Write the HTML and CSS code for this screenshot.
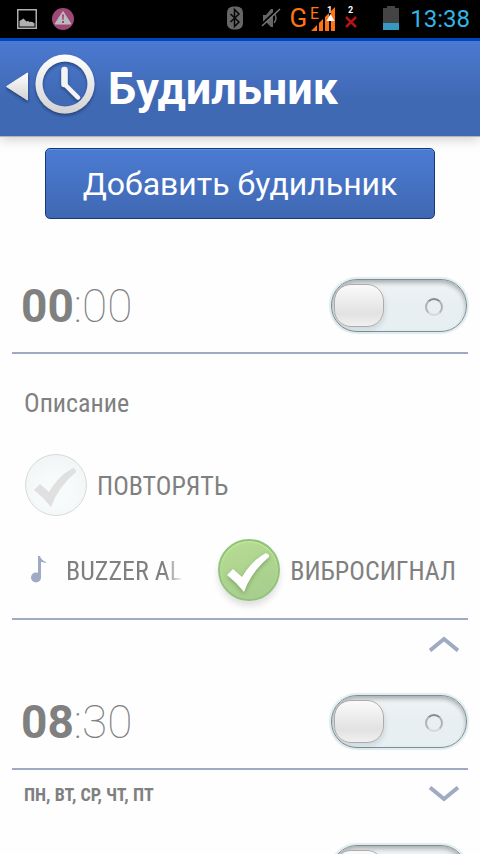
FILE: index.html
```html
<!DOCTYPE html>
<html lang="ru">
<head>
<meta charset="utf-8">
<meta name="viewport" content="width=device-width, initial-scale=1">
<title>Будильник</title>
<link rel="stylesheet" href="styles.css">
</head>
<body>
<div class="app">
  <div class="status">
    <div class="status-group status-left">
      <svg width="20" height="20" viewBox="0 0 20 20" aria-hidden="true"><rect x=".75" y=".75" width="18.5" height="18.5" fill="none" stroke="#b0b0b0" stroke-width="1.5"/><path d="M2.500 17.500v-5.500l4-2.500 3 3q2-1 3 .5 3-1 5 1.500v3z" fill="#b0b0b0"/></svg>
      <svg width="22" height="22" viewBox="0 0 22 22" aria-hidden="true"><circle cx="11" cy="11" r="11" fill="#9f4878"/><path d="M11 3.500 19 16H3z" fill="#bbb" stroke="#bbb" stroke-linejoin="round"/><path d="M10 6.500h2l-.4 5.500h-1.200zM10 13h2v2h-2z" fill="#9f4878"/></svg>
    </div>
    <div class="status-group status-right">
      <svg width="16" height="24" viewBox="0 0 16 24" aria-hidden="true"><rect y=".5" width="16" height="23" rx="6" fill="#666"/><path d="m3.500 8 8.500 8-4.500 4.500v-17L12 8l-8.500 8" fill="none" stroke="#050505" stroke-width="1.500"/></svg>
      <svg class="mute" width="20" height="22" viewBox="0 0 20 22" aria-hidden="true"><path d="M2 8h3l5-6h2v18h-2l-5-5H2z" fill="#666"/><path d="M13 6q4 5 0 10" fill="none" stroke="#666" stroke-width="1.500"/><path d="M0 18 18 1" stroke="#000" stroke-width="2"/><path d="M1 19 19 2" stroke="#777" stroke-width="1.500"/></svg>
      <span class="network">G</span>
      <svg class="signal" width="24" height="26" viewBox="0 0 24 26" aria-hidden="true"><path d="M0 26l6-6v6zM8 26v-8l4-4v12zM14 26V12l4-4v18zM20 26V6l4-4v24z" fill="#ff7410"/><text x="-1" y="14" class="signal-edge">E</text><path d="m19.500 9 4 7h-8z" fill="#fff"/><text x="16" y="8" class="signal-sim">1</text></svg>
      <svg class="no-sim" width="12" height="26" viewBox="0 0 12 26" aria-hidden="true"><text x="3" y="8" class="signal-sim">2</text><path d="m1 12 10 10M11 12 1 22" stroke="#b51414" stroke-width="2.500"/></svg>
      <svg class="battery" width="16" height="24" viewBox="0 0 16 24" aria-hidden="true"><path d="M0 2h4V0h8v2h4v22H0z" fill="#444"/><path d="M0 17h16v7H0z" fill="#3699c0"/></svg>
      <time class="clock">13:38</time>
    </div>
  </div>

  <header class="header">
    <button class="back" type="button" aria-label="Назад">
      <svg width="92" height="76" viewBox="0 0 92 76" aria-hidden="true">
        <defs>
          <linearGradient id="metal" x1="0" y1="0" x2="0" y2="1"><stop offset="0" stop-color="#fff"/><stop offset="1" stop-color="#d2d2d5"/></linearGradient>
          <filter id="drop" x="-20%" y="-20%" width="140%" height="150%"><feDropShadow dx="0" dy="2" stdDeviation="1.500" flood-color="#12274d" flood-opacity=".6"/></filter>
        </defs>
        <g filter="url(#drop)">
          <path d="M1.500 35.500 22.500 22v27z" fill="url(#metal)" stroke="url(#metal)" stroke-linejoin="round"/>
          <path fill-rule="evenodd" d="M60 3.500a29.500 29.500 0 1 1 0 59 29.500 29.500 0 0 1 0-59zm0 7a22.500 22.500 0 1 0 0 45 22.500 22.500 0 0 0 0-45z" fill="url(#metal)"/>
          <path d="M59.500 19v14" fill="none" stroke="#f4f4f5" stroke-width="6.500" stroke-linecap="round"/>
          <path d="m59.500 33 13.500 13.500" fill="none" stroke="#f4f4f5" stroke-width="4.500" stroke-linecap="round"/>
        </g>
      </svg>
    </button>
    <h1 class="title">Будильник</h1>
  </header>

  <main class="content">
    <button class="add" type="button">Добавить будильник</button>

    <section class="alarm">
      <div class="alarm-top">
        <time class="time"><b>00</b>:00</time>
        <input class="switch" type="checkbox" role="switch" aria-label="Включить будильник">
      </div>
      <div class="details">
        <input class="description" type="text" placeholder="Описание" aria-label="Описание">
        <div class="option-row">
          <label class="option">
            <span class="check">
              <input class="check-input" type="checkbox">
              <svg class="check-mark" viewBox="0 0 62 62" aria-hidden="true"><path d="m9 36 6-6 9 8Q33 22 48 14l3 2v2Q33 33 26 53 18 43 9 36z" fill="currentColor"/></svg>
            </span>
            <span class="option-text">ПОВТОРЯТЬ</span>
          </label>
        </div>
        <div class="option-row">
          <button class="ringtone" type="button">
            <svg class="note" width="15" height="27" viewBox="0 0 15 27" aria-hidden="true"><circle cx="5" cy="21.500" r="5" fill="#9fabc2"/><path d="M7 0h2q1 4 6 6v1q-3-1-5-1v16H7z" fill="#9fabc2"/></svg>
            <span class="ringtone-name option-text">BUZZER AL</span>
          </button>
          <label class="option">
            <span class="check">
              <input class="check-input" type="checkbox" checked>
              <svg class="check-mark" viewBox="0 0 62 62" aria-hidden="true"><path d="m9 36 6-6 9 8Q33 22 48 14l3 2v2Q33 33 26 53 18 43 9 36z" fill="currentColor"/></svg>
            </span>
            <span class="option-text">ВИБРОСИГНАЛ</span>
          </label>
        </div>
      </div>
      <div class="alarm-foot">
        <span class="days"></span>
        <button class="toggle" type="button" aria-label="Свернуть"><svg width="30" height="16" viewBox="0 0 30 16" aria-hidden="true"><path d="M1 14.500 15 3l14 11.500" fill="none" stroke="#9fabc2" stroke-width="4"/></svg></button>
      </div>
    </section>

    <section class="alarm">
      <div class="alarm-top">
        <time class="time"><b>08</b>:30</time>
        <input class="switch" type="checkbox" role="switch" aria-label="Включить будильник">
      </div>
      <div class="alarm-foot">
        <span class="days">ПН, ВТ, СР, ЧТ, ПТ</span>
        <button class="toggle" type="button" aria-label="Развернуть"><svg width="30" height="16" viewBox="0 0 30 16" aria-hidden="true"><path d="M1 1.500 15 13 29 1.500" fill="none" stroke="#9fabc2" stroke-width="4"/></svg></button>
      </div>
    </section>

    <section class="alarm">
      <div class="alarm-top">
        <input class="switch" type="checkbox" role="switch" aria-label="Включить будильник">
      </div>
    </section>
  </main>
</div>
</body>
</html>
```
FILE: styles.css
```css
*, *::before, *::after { box-sizing: border-box; }

body {
  margin: 0;
  background: #fefefe;
  color: #808080;
  font-family: Roboto, "Noto Sans", sans-serif;
}

button {
  border: 0;
  padding: 0;
  background: none;
  color: inherit;
  font: inherit;
}

svg { display: block; flex: none; }

.app {
  display: flex;
  flex-direction: column;
  height: 100vh;
}

/* Status bar */
.status {
  display: flex;
  flex: none;
  justify-content: space-between;
  height: 38px;
  padding: 0 10px 0 17px;
  background: #000;
}

.status-group { display: flex; align-items: center; }
.status-left { gap: 15px; }
.mute { margin-left: 18px; }

.network {
  margin-left: 9px;
  color: #ff7410;
  font-size: 26px;
  line-height: 36px;
}

.status-right { padding-bottom: 2px; }
.signal { margin-left: 4px; overflow: visible; }
.signal-edge { fill: #ff7410; font-size: 16px; }
.signal-sim { fill: #fff; font-size: 9px; font-weight: 700; }
.no-sim { margin-left: 10px; overflow: visible; }
.battery { margin-left: 26px; }

.clock {
  margin-left: 11px;
  padding-top: 2px;
  color: #33b5e5;
  font-size: 24px;
}

/* Header */
.header {
  position: relative;
  display: flex;
  flex: none;
  align-items: center;
  gap: 11px;
  height: 99px;
  padding-left: 5px;
  border-top: 3px solid #0046c3;
  border-bottom: 1px solid #b4b4b8;
  background: linear-gradient(#4c7ad1, #4069b4 60%, #4069b4);
  box-shadow: 0 2px 12px rgba(0, 0, 0, .2);
}

.title {
  margin: 0;
  color: #fff;
  font-size: 45px;
  font-weight: 700;
}

/* Alarm list */
.content {
  display: flex;
  flex: 1;
  flex-direction: column;
  min-height: 0;
  padding: 11px 12px 0;
  overflow-y: auto;
  scrollbar-width: none;
}

.add {
  flex: none;
  height: 71px;
  margin: 0 33px 39px;
  border: 1px solid #17397a;
  border-radius: 5px;
  background: linear-gradient(#4b7bd3, #4068b2);
  box-shadow: inset 0 1px #5b98de;
  color: #fff;
  font-size: 32px;
}

.alarm { flex: none; }

.alarm-top {
  display: flex;
  align-items: center;
  justify-content: flex-end;
  height: 96px;
  border-bottom: 2px solid #9fabc2;
}

.time {
  margin-right: auto;
  padding: 2px 0 0 9px;
  font-size: 46px;
  font-weight: 100;
}

.time b { font-weight: 700; }

.switch {
  appearance: none;
  position: relative;
  width: 136px;
  height: 53px;
  margin: 0 1px 0 0;
  border: 1px solid #7b9096;
  border-radius: 26px;
  background: linear-gradient(#eff4f6, #e7eff2 50%);
  box-shadow: 0 0 1px 2px #e0ecee, inset 0 3px 4px rgba(0, 0, 0, .28);
}

.switch::before {
  content: "";
  position: absolute;
  top: 4px;
  left: 2px;
  width: 50px;
  height: 43px;
  border: 1px solid #acacac;
  border-radius: 17px;
  background: linear-gradient(#fafafa, #e2e2e2 70%, #f0f0f0);
  box-shadow: 1px 3px 5px rgba(0, 0, 0, .1);
}

.switch::after {
  content: "";
  position: absolute;
  top: 18px;
  right: 23px;
  width: 18px;
  height: 18px;
  border: 2px solid;
  border-color: #888 #b0b3b4 #d5d8d9;
  border-radius: 50%;
}

.details {
  padding: 10px 12px 6px;
  border-bottom: 2px solid #9fabc2;
  font-family: "Roboto Condensed", Roboto, sans-serif;
  font-size: 26px;
}

.description {
  display: block;
  width: 100%;
  height: 78px;
  padding: 0;
  border: 0;
  background: none;
  color: #808080;
  font: inherit;
}

.description::placeholder { color: #808080; opacity: 1; }

.option-row {
  display: flex;
  align-items: center;
  justify-content: space-between;
  height: 85px;
}

.option {
  display: flex;
  align-items: center;
  gap: 10px;
  margin-left: 1px;
  white-space: nowrap;
}

.option-text { padding-top: 3px; }

.check { display: grid; width: 62px; height: 62px; }
.check-input, .check-mark { grid-area: 1 / 1; width: 62px; height: 62px; }

.check-input {
  appearance: none;
  margin: 0;
  border: 1px solid #d8dada;
  border-radius: 50%;
  background: radial-gradient(circle at 50% 60%, #f8fbfb 30%, #edf2f3);
}

.check-mark { z-index: 1; color: #e0e0e0; pointer-events: none; }

.check-input:checked {
  border: 2px solid #92c281;
  background: linear-gradient(160deg, #b6dc94, #a5cc8c);
  box-shadow: 0 5px 6px rgba(0, 0, 0, .12), inset 0 1px 2px #cdf090;
}

.check-input:checked + .check-mark {
  color: #fff;
  filter: drop-shadow(0 2px 2px rgba(60, 100, 50, .4));
}

.ringtone {
  display: flex;
  align-items: center;
  gap: 20px;
  min-width: 0;
  padding-left: 7px;
}

.ringtone-name {
  width: 117px;
  text-align: left;
  white-space: nowrap;
  mask-image: linear-gradient(to right, #000 85%, transparent);
}

.alarm-foot {
  display: flex;
  align-items: center;
  justify-content: space-between;
  height: 54px;
  padding: 0 9px 6px 12px;
}

.days {
  font-family: "Roboto Condensed", Roboto, sans-serif;
  font-size: 18px;
  font-weight: 700;
}
```
